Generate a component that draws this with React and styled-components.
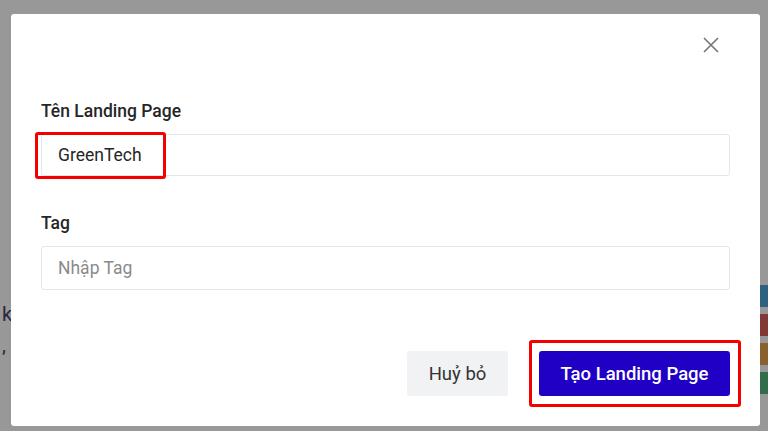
import React from "react";
import styled, {createGlobalStyle} from "styled-components";

const GlobalStyle = createGlobalStyle`
    html, body {
        margin: 0;
        padding: 0;
        width: 768px;
        height: 431px;
        overflow: hidden;
        font-family: Roboto, "Liberation Sans", Arial, sans-serif;
    }
`;

const Page = styled.div`
    position: relative;
    width: 768px;
    height: 431px;
    background: #ffffff;
    overflow: hidden;
`;

// faint bits of the page behind the overlay
const BehindText = styled.div`
    position: absolute;
    left: 2px;
    top: ${props => props.top}px;
    font-size: 20px;
    color: #0b1040;
    white-space: nowrap;
`;

const BehindPill = styled.div`
    position: absolute;
    right: -20px;
    top: ${props => props.top}px;
    width: 30px;
    height: 22px;
    border-radius: 3px;
    background: ${props => props.color};
`;

const Backdrop = styled.div`
    position: absolute;
    inset: 0;
    background: rgba(60, 60, 60, 0.53);
    display: flex;
    align-items: flex-start;
    padding: 14px 8px 0 11px;
`;

const Modal = styled.div`
    width: 749px;
    height: 412px;
    box-sizing: border-box;
    background: #ffffff;
    border-radius: 3px;
    padding: 23px 30px 30px 30px;
    display: flex;
    flex-direction: column;
`;

const Header = styled.div`
    display: flex;
    justify-content: flex-end;
    height: 63px;
`;

const CloseButton = styled.button`
    width: 16px;
    height: 16px;
    padding: 0;
    margin-right: 11px;
    border: none;
    background: none;
    cursor: pointer;
    display: flex;
`;

const Field = styled.div`
    display: flex;
    flex-direction: column;
    margin-bottom: ${props => props.spacing}px;
`;

const Label = styled.label`
    font-size: 17.5px;
    line-height: 22px;
    font-weight: 500;
    color: #262626;
    margin-bottom: 12px;
`;

const InputWrap = styled.div`
    position: relative;
`;

const Input = styled.input`
    width: 100%;
    height: ${props => props.h}px;
    box-sizing: border-box;
    border: 1px solid #e6e6e6;
    border-radius: 3px;
    padding: 0 16px;
    font-family: Roboto, "Liberation Sans", Arial, sans-serif;
    font-size: 17.5px;
    color: #262626;
    outline: none;
    &::placeholder {
        color: #8a8a8a;
    }
`;

const Highlight = styled.div`
    position: absolute;
    left: ${props => props.left}px;
    top: ${props => props.top}px;
    width: ${props => props.width}px;
    height: ${props => props.height}px;
    box-sizing: border-box;
    border: 3px solid #f50000;
    border-radius: 3px;
    pointer-events: none;
`;

const Footer = styled.div`
    margin-top: auto;
    display: flex;
    justify-content: flex-end;
    gap: 31px;
`;

const Button = styled.button`
    position: relative;
    height: 45px;
    width: ${props => props.width}px;
    border: none;
    border-radius: 3px;
    font-family: Roboto, "Liberation Sans", Arial, sans-serif;
    font-size: 18.5px;
    font-weight: ${props => props.primary ? 500 : 400};
    background: ${props => props.primary ? "#1f00c4" : "#f1f2f4"};
    color: ${props => props.primary ? "#ffffff" : "#333333"};
    cursor: pointer;
`;

const App = () => {
    return(
        <Page>
            <GlobalStyle />
            <BehindText top={302}>kế landing page (Tự ho</BehindText>
            <BehindText top={333}>, hãy bấm vào ô Thêm</BehindText>
            <BehindPill top={285} color="#1b8ad0" />
            <BehindPill top={314} color="#d0342c" />
            <BehindPill top={343} color="#e08a1e" />
            <BehindPill top={372} color="#27a35a" />
            <Backdrop>
                <Modal>
                    <Header>
                        <CloseButton aria-label="close">
                            <svg width="16" height="16" viewBox="0 0 16 16">
                                <path d="M1 1 L15 15 M15 1 L1 15" stroke="#757575" strokeWidth="1.6" fill="none" />
                            </svg>
                        </CloseButton>
                    </Header>
                    <Field spacing={36}>
                        <Label>Tên Landing Page</Label>
                        <InputWrap>
                            <Input h={42} defaultValue="GreenTech" />
                            <Highlight left={-6} top={-2} width={131} height={47} />
                        </InputWrap>
                    </Field>
                    <Field spacing={0}>
                        <Label>Tag</Label>
                        <Input h={44} placeholder="Nhập Tag" />
                    </Field>
                    <Footer>
                        <Button width={101}>Huỷ bỏ</Button>
                        <Button primary width={191}>
                            Tạo Landing Page
                            <Highlight left={-10} top={-11} width={212} height={67} />
                        </Button>
                    </Footer>
                </Modal>
            </Backdrop>
        </Page>
    );
};

export default App;
